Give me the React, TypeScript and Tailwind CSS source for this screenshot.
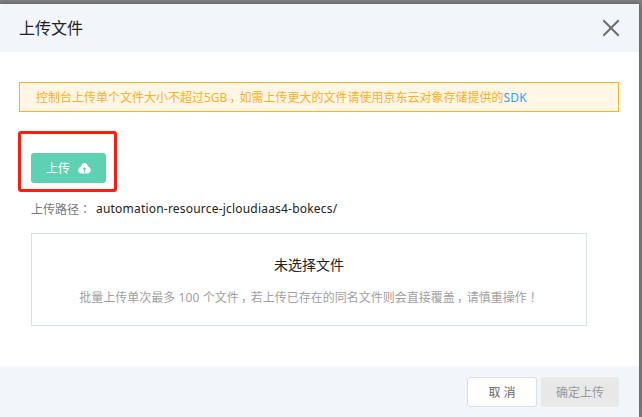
import React from "react";

const Comma = () => <span className="inline-block w-3 pl-[2px] [font-feature-settings:'halt']">，</span>;

function CloudUpload() {
  return (
    <svg width="13" height="11" viewBox="0 0 13 11" className="ml-2 shrink-0">
      <path
        d="M6.5 0.1C8.2 0.1 9.5 1.5 9.9 3.4C11.6 4 12.8 5.4 12.8 7.2C12.8 9.1 11.4 10.4 9.4 10.4H3.6C1.6 10.4 0.2 9.1 0.2 7.2C0.2 5.4 1.4 4 3.1 3.4C3.5 1.5 4.8 0.1 6.5 0.1Z"
        fill="#fff"
      />
      <path d="M6.5 4L8.6 6.6H7V9.4H6V6.6H4.4Z" fill="#5fd1b3" />
    </svg>
  );
}

export default function App() {
  return (
    <div className="h-[417px] w-[642px] overflow-hidden bg-[#7f7f7f] pt-1 text-[12px] leading-[18px] [font-family:'Noto_Sans','Noto_Sans_CJK_SC',sans-serif]">
      <div className="flex h-[413px] w-[639px] flex-col bg-white shadow-[0_0_4px_rgba(0,0,0,0.35)]">
        <header className="flex h-12 shrink-0 items-center justify-between bg-[#f2f6fb] pr-[19px] pl-[19px]">
          <h1 className="text-[16px] leading-6 text-[#222]">上传文件</h1>
          <svg width="18" height="18" viewBox="0 0 18 18" className="mb-px" aria-label="关闭">
            <path d="M1.3 1.2L16.7 16.8M16.7 1.2L1.3 16.8" stroke="#6c6c6c" strokeWidth="2" fill="none" />
          </svg>
        </header>

        <main className="flex grow flex-col items-start pt-[30px]">
          <div className="ml-[19px] flex h-[30px] w-[600px] items-center border border-[#fbb31c] bg-[#fff6e6] pt-0.5 pl-4 text-[#fbb01c]">
            <p className="whitespace-nowrap">
              控制台上传单个文件大小不超过5GB<Comma />如需上传更大的文件请使用京东云对象存储提供的
              <a className="tracking-[0.2px] text-[#2ea3f5]">SDK</a>
            </p>
          </div>

          <div className="mt-[19px] ml-[18px] flex h-[61px] w-[99px] items-start rounded-[3px] border-[3px] border-[#ff1d12] pt-[19px] pl-[10px]">
            <button className="flex h-[30px] w-[75px] items-center rounded-[3px] bg-[#5fd1b3] pl-[15px] text-white">
              <span className="pt-px">上传</span>
              <CloudUpload />
            </button>
          </div>

          <div className="mt-2 ml-[31px] flex h-[18px] whitespace-nowrap">
            <span className="text-[#777]">
              上传路径<span className="[font-family:'Noto_Sans_CJK_TC',sans-serif]">：</span>
            </span>
            <span className="ml-[5px] tracking-[0.2px] text-[#222]">automation-resource-jcloudiaas4-bokecs/</span>
          </div>

          <section className="mt-[15px] ml-[31px] flex h-[93px] w-[556px] flex-col items-center border border-[#d8e0e8] pt-[21px]">
            <h2 className="text-[14px] leading-5 text-[#222]">未选择文件</h2>
            <p className="mt-[13px] whitespace-nowrap text-[#a0a0a0]">
              批量上传单次最多<span className="tracking-[0.15px]"> 100 </span>个文件<Comma />若上传已存在的同名文件则会直接覆盖<Comma />请慎重操作
              <span className="[font-family:'Noto_Sans_CJK_TC',sans-serif]">！</span>
            </p>
          </section>
        </main>

        <footer className="flex h-[51px] shrink-0 items-start justify-end gap-1 bg-[#f2f6fb] pt-[11px] pr-5">
          <button className="h-[30px] w-[70px] rounded-[3px] border border-[#d5e0eb] bg-white pt-0.5 text-[#666]">取 消</button>
          <button className="h-[30px] w-[78px] rounded-[3px] bg-[#e8e8e8] pt-0.5 text-[#999]">确定上传</button>
        </footer>
      </div>
    </div>
  );
}
